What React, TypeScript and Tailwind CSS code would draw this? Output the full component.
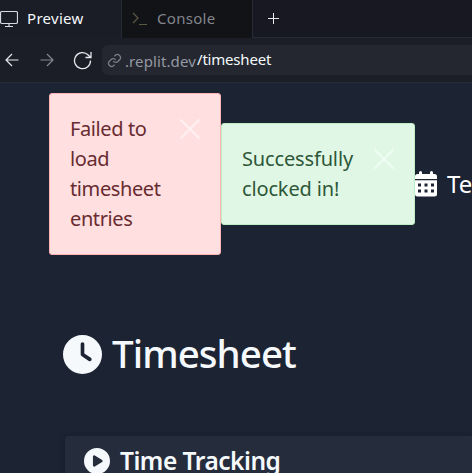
import React from 'react';
import { FaClock, FaCirclePlay } from 'react-icons/fa6';

function Close({ className }: { className: string }) {
  return (
    <svg className={className} viewBox="0 0 20 20" fill="none" stroke="currentColor" strokeWidth="2" strokeLinecap="round">
      <path d="M1 1 19 19M19 1 1 19" />
    </svg>
  );
}

function Calendar() {
  return (
    <svg className="h-[26px] w-[22px] shrink-0" viewBox="0 0 22 26" fill="currentColor">
      <path d="M4 1.5a1.5 1.5 0 0 1 3 0V3h8V1.5a1.5 1.5 0 0 1 3 0V3h1.5A2.5 2.5 0 0 1 22 5.500V8H0V5.500A2.500 2.500 0 0 1 2.500 3H4Z" />
      <path fillRule="evenodd" d="M0 9.300h22V23a2.500 2.500 0 0 1-2.500 2.500h-17A2.500 2.500 0 0 1 0 23ZM3 12.500v3h3v-3ZM9.500 12.500v3h3v-3ZM16 12.500v3h3v-3ZM3 18.500v3h3v-3ZM9.500 18.500v3h3v-3ZM16 18.500v3h3v-3Z" />
    </svg>
  );
}

export default function App() {
  return (
    <div className="flex h-[473px] w-[472px] flex-col overflow-hidden bg-[#1c2333] font-['Noto_Sans',sans-serif] text-[#f5f9fc]">
      <div className="flex h-[38px] shrink-0 bg-[#171821]">
        <div className="flex w-[122px] items-center border-r border-[#262a36] bg-[#1b1d26] text-[15px]">
          <svg className="h-[18px] w-[18px] shrink-0" viewBox="0 0 18 18" fill="none" stroke="#d5d9e2" strokeWidth="1.2">
            <rect x="0.5" y="1.5" width="17" height="12" rx="1.5" />
            <path d="M9 13.5V16.5M5 16.5h8" />
          </svg>
          <span className="ml-[9px] whitespace-nowrap pb-0.5 tracking-[0.3px]">Preview</span>
        </div>
        <div className="flex w-[131px] items-center border-r border-[#262a36] bg-[#121317] pl-[10px] text-[15px] text-[#83868d]">
          <svg className="h-4 w-4 shrink-0" viewBox="0 0 16 16" fill="none" stroke="#5d5843" strokeWidth="1.2">
            <path d="m1 2 5 5-5 5M7 13.5h8" />
          </svg>
          <span className="ml-[9px] whitespace-nowrap pb-0.5 tracking-[0.3px]">Console</span>
        </div>
        <div className="flex flex-1 items-center border-b border-[#282b34] pl-[15px]">
          <svg className="h-[11px] w-[11px]" viewBox="0 0 11 11" stroke="#e8eaf0" strokeWidth="1"><path d="M5.5 0v11M0 5.500h11" /></svg>
        </div>
      </div>
      <div className="flex h-[45px] shrink-0 items-center border-b border-[#282d39] bg-[#1b1e26]">
        <svg className="ml-[5px] h-[14px] w-[14px]" viewBox="0 0 14 14" fill="none" stroke="#e5e8ee" strokeWidth="1.2"><path d="M13.5 7H1M7 1 1 7l6 6" /></svg>
        <svg className="ml-[21px] h-[14px] w-[14px]" viewBox="0 0 14 14" fill="none" stroke="#858892" strokeWidth="1.2"><path d="M.5 7H13M7 1l6 6-6 6" /></svg>
        <svg className="ml-[19px] h-[19px] w-[19px]" viewBox="0 0 19 19" fill="none" stroke="#e5e8ee" strokeWidth="1.3"><path d="M17.500 9.500A8 8 0 1 1 15.200 4l2.500 2.500M18 1v5.500h-5.500" /></svg>
        <div className="ml-[10px] flex h-[30px] flex-1 items-center rounded-l-md bg-[#24272f] pl-[5px] text-[15px]">
          <svg className="h-[15px] w-[15px]" viewBox="0 0 24 24" fill="none" stroke="#7b7e88" strokeWidth="2"><path d="M10 13a5 5 0 0 0 7.5.5l3-3a5 5 0 0 0-7-7l-1.800 1.700M14 11a5 5 0 0 0-7.500-.5l-3 3a5 5 0 0 0 7 7l1.700-1.700" /></svg>
          <span className="ml-[3px] w-[70px] pt-0.5 tracking-[0.1px] text-[#9498a2]">.replit.dev</span>
          <span className="ml-[2px] pb-0.5 tracking-[-0.2px]">/timesheet</span>
        </div>
      </div>
      <div className="flex h-[172px] shrink-0 items-center pl-[49px] pt-[10px]">
        <div className="flex h-[162px] w-[172px] shrink-0 justify-between rounded-[3px] border border-[#ffb3b5] bg-[#ffdfdf] px-5 pt-5 text-[20px] leading-[30px] tracking-[-0.4px] text-[#682b31]">
          <div className="w-[98px]">Failed to load timesheet entries</div>
          <Close className="mt-[5px] h-5 w-5 shrink-0 text-[#fff0f1]" />
        </div>
        <div className="flex h-[102px] w-[194px] shrink-0 justify-between rounded-[3px] border border-[#bdeec5] bg-[#e1f7e5] px-5 pt-5 text-[20px] leading-[30px] tracking-[-0.15px] text-[#2e5739]">
          <div className="w-[113px]">Successfully clocked in!</div>
          <Close className="mt-[5px] h-5 w-5 shrink-0 text-[#f0fcf3]" />
        </div>
        <div className="mt-[20px] flex items-center text-[24px] text-white">
          <Calendar />
          <span className="ml-[10px] whitespace-nowrap">Te</span>
        </div>
      </div>
      <h1 className="ml-[63px] mt-[75px] flex h-12 shrink-0 items-center text-[38.5px] font-medium tracking-[-0.95px]">
        <FaClock className="h-[39px] w-[39px]" /><span className="ml-[10px]">Timesheet</span>
      </h1>
      <section className="ml-[65px] mt-[58px] flex h-[60px] shrink-0 items-center rounded-tl-[3px] bg-[#252c3b] pb-[10px] pl-[19px] text-[24.5px] font-semibold tracking-[-0.5px] shadow-[0_1px_5px_#151b28]">
        <FaCirclePlay className="h-[26px] w-[26px]" /><h2 className="ml-[10px]">Time Tracking</h2>
      </section>
    </div>
  );
}
